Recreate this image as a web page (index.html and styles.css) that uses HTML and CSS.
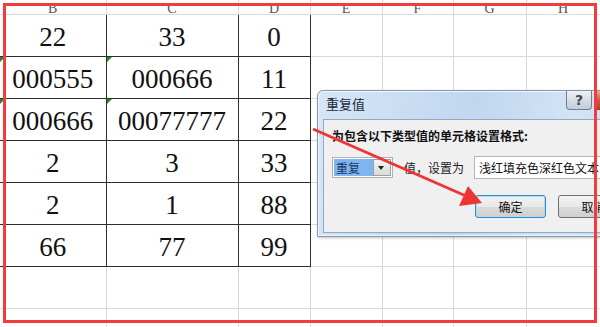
FILE: index.html
```html
<!DOCTYPE html>
<html lang="zh-CN">
<head>
  <meta charset="UTF-8">
  <meta name="viewport" content="width=device-width, initial-scale=1.0">
  <title>重复值</title>
  <link rel="stylesheet" href="styles.css">
</head>
<body>

  <!-- Worksheet -->
  <table class="sheet">
    <colgroup>
      <col class="col-b">
      <col class="col-c">
      <col class="col-d">
      <col class="col-e">
      <col class="col-f">
      <col class="col-g">
      <col class="col-h">
    </colgroup>
    <thead>
      <tr>
        <th>B</th><th>C</th><th>D</th><th>E</th><th>F</th><th>G</th><th>H</th>
      </tr>
    </thead>
    <tbody>
      <tr><td class="v">22</td><td class="v">33</td><td class="v">0</td><td></td><td></td><td></td><td></td></tr>
      <tr><td class="v t">000555</td><td class="v t">000666</td><td class="v">11</td><td></td><td></td><td></td><td></td></tr>
      <tr><td class="v t">000666</td><td class="v t">00077777</td><td class="v">22</td><td></td><td></td><td></td><td></td></tr>
      <tr><td class="v">2</td><td class="v">3</td><td class="v">33</td><td></td><td></td><td></td><td></td></tr>
      <tr><td class="v">2</td><td class="v">1</td><td class="v">88</td><td></td><td></td><td></td><td></td></tr>
      <tr><td class="v">66</td><td class="v">77</td><td class="v">99</td><td></td><td></td><td></td><td></td></tr>
      <tr><td></td><td></td><td></td><td></td><td></td><td></td><td></td></tr>
      <tr><td></td><td></td><td></td><td></td><td></td><td></td><td></td></tr>
    </tbody>
  </table>

  <!-- Duplicate values dialog -->
  <div class="dlg">
    <div class="dlg-title">
      <span class="dlg-name">重复值</span>
      <span class="btn-help">?</span>
      <span class="btn-close"></span>
    </div>
    <div class="dlg-body">
      <div class="dlg-label">为包含以下类型值的单元格设置格式:</div>
      <div class="dlg-row">
        <div class="combo">
          <span class="combo-val">重复</span>
          <span class="combo-drop"></span>
        </div>
        <span class="dlg-text">值，设置为</span>
        <div class="field">浅红填充色深红色文本</div>
      </div>
      <div class="dlg-buttons">
        <button class="btn btn-default">确定</button>
        <button class="btn">取消</button>
      </div>
    </div>
  </div>

  <!-- Annotation -->
  <svg class="arrow" width="600" height="327" viewBox="0 0 600 327">
    <line x1="313" y1="129" x2="466" y2="196" stroke="#ee3535" stroke-width="3"/>
    <polygon points="482,203 459,206 468,186" fill="#ee3535"/>
  </svg>
  <div class="frame"></div>

</body>
</html>
```

FILE: styles.css
```css
body {
  margin: 0;
  width: 600px;
  height: 327px;
  overflow: hidden;
  position: relative;
  background: #fff;
}
.sheet {
  border-collapse: collapse;
  table-layout: fixed;
  width: 600px;
}
.col-b { width: 106px; }
.col-c { width: 132px; }
.col-d { width: 72px; }
.col-e { width: 72px; }
.col-f { width: 71px; }
.col-g { width: 73px; }
.col-h { width: 74px; }
.sheet th, .sheet td {
  border: 1px solid #d9d9d9;
  padding: 0;
}
.sheet th:first-child, .sheet td:first-child {
  border-left: none;
}
.sheet th {
  height: 14px;
  border-top: none;
  font: normal 14px/10px "Liberation Serif", serif;
  color: #555;
  vertical-align: bottom;
  overflow: hidden;
}
.sheet td {
  height: 41px;
}
.sheet td.v {
  height: 38px;
  padding-top: 3px;
  border-color: #2e2e2e;
  font: 27px/1 "Liberation Serif", serif;
  color: #111;
  text-align: center;
  vertical-align: middle;
}
/* green marker: number stored as text */
.sheet td.t {
  position: relative;
}
.sheet td.t::before {
  content: "";
  position: absolute;
  left: 0;
  top: 0;
  border-top: 5px solid #1f8a2c;
  border-right: 5px solid transparent;
}

/* dialog window */
.dlg {
  position: absolute;
  left: 317px;
  top: 90px;
  width: 330px;
  height: 147px;
  box-sizing: border-box;
  border: 1px solid #8397ad;
  border-radius: 6px 6px 0 0;
  background: linear-gradient(100deg, #d6e6f6, #c0d7ef 45%, #d3e4f5 75%, #bcd3ec);
  box-shadow: inset 0 0 0 1px rgba(255, 255, 255, 0.7), 1px 1px 3px rgba(0, 0, 0, 0.25);
  display: flex;
  flex-direction: column;
  font-family: "Noto Sans CJK SC", sans-serif;
}
.dlg-title {
  height: 28px;
  display: flex;
  align-items: flex-start;
  padding-left: 8px;
}
.dlg-name {
  font-size: 13px;
  line-height: 26px;
  color: #1c2b3d;
}
.btn-help {
  margin-left: auto;
  width: 26px;
  height: 19px;
  box-sizing: border-box;
  border: 1px solid #6f7f92;
  border-top: none;
  border-radius: 0 0 4px 4px;
  background: linear-gradient(#eef2f7, #d5dde6 50%, #c3cdd8);
  font: bold 14px/18px "DejaVu Sans", sans-serif;
  color: #3c4a5a;
  text-align: center;
}
.btn-close {
  margin-left: 2px;
  margin-right: 9px;
  width: 43px;
  height: 19px;
  box-sizing: border-box;
  border: 1px solid #8a3a32;
  border-top: none;
  border-radius: 0 0 4px 4px;
  background: linear-gradient(#e9a99c, #d0584a 50%, #c23a2a);
}
.dlg-body {
  flex: 1;
  margin: 0 5px 3px;
  background: #f0f0f0;
  border: 1px solid #94a9c1;
  padding: 7px 8px 0;
  font-size: 12px;
  color: #111;
}
.dlg-label {
  font-weight: bold;
  line-height: 18px;
}
.dlg-row {
  display: flex;
  align-items: center;
  margin-top: 11px;
  height: 23px;
}
.combo {
  display: flex;
  width: 61px;
  height: 21px;
  box-sizing: border-box;
  border: 1px solid #a9b0b8;
  background: #fff;
  padding: 1px;
}
.combo-val {
  width: 38px;
  background: #7fb4ee;
  color: #1a3560;
  line-height: 17px;
  padding-left: 2px;
}
.combo-drop {
  margin-left: auto;
  width: 16px;
  border: 1px solid #9aa0a8;
  background: linear-gradient(#f4f4f4, #dadada);
  position: relative;
}
.combo-drop::after {
  content: "";
  position: absolute;
  left: 4px;
  top: 6px;
  border-top: 4px solid #222;
  border-left: 3.5px solid transparent;
  border-right: 3.5px solid transparent;
}
.dlg-text {
  margin-left: 11px;
  color: #222;
  white-space: nowrap;
}
.field {
  flex: none;
  margin-left: 10px;
  width: 170px;
  height: 23px;
  box-sizing: border-box;
  border: 1px solid #b3b6bb;
  background: #fff;
  line-height: 21px;
  padding-left: 4px;
  white-space: nowrap;
  overflow: hidden;
}
.dlg-buttons {
  display: flex;
  gap: 12px;
  margin-top: 16px;
  padding-left: 143px;
}
.btn {
  flex: none;
  width: 71px;
  height: 23px;
  border: 1px solid #707070;
  border-radius: 3px;
  background: linear-gradient(#f3f3f3, #e8e8e8 50%, #dbdbdb 51%, #cfcfcf);
  font: 12px "Noto Sans CJK SC", sans-serif;
  color: #111;
  padding: 0;
}
.btn-default {
  border-color: #3b88c3;
  box-shadow: inset 0 0 0 1px #a8dcf5;
}

/* annotation overlays */
.arrow {
  position: absolute;
  left: 0;
  top: 0;
  pointer-events: none;
}
.frame {
  position: absolute;
  left: 3px;
  top: 3px;
  width: 594px;
  height: 320px;
  box-sizing: border-box;
  border: 3px solid #f03c3c;
  pointer-events: none;
}
```
